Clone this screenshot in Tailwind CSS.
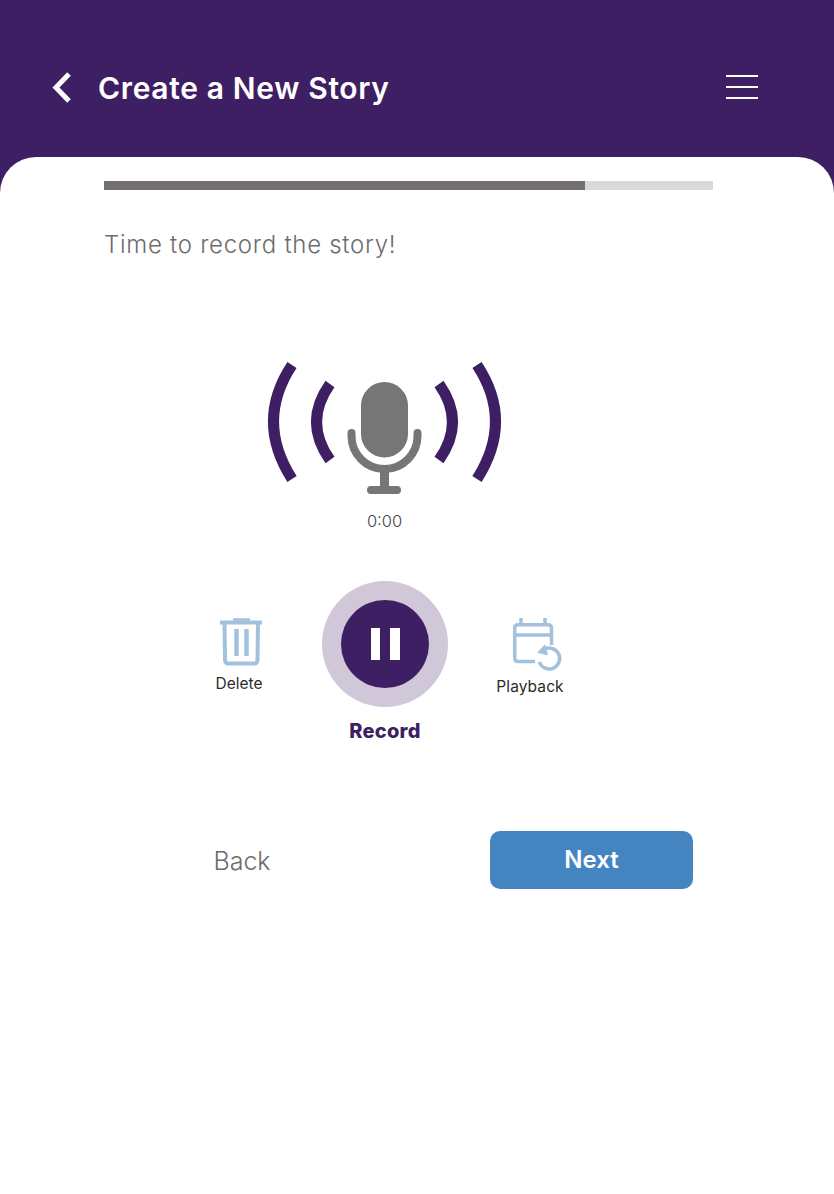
<!DOCTYPE html>
<html lang="en">
<head>
<meta charset="utf-8">
<title>Create a New Story</title>
<script src="https://cdn.jsdelivr.net/npm/@tailwindcss/browser@4"></script>
</head>
<body class="font-['Inter','Liberation_Sans',sans-serif]">
<div class="w-[834px] h-[1194px] overflow-hidden bg-[#3f1f63] flex flex-col">
  <header class="h-[157px] shrink-0 flex items-start pl-[52px] pr-[76px] pt-[71px]">
    <svg class="w-[19px] h-[34px] shrink-0" viewBox="0 0 19 34" fill="none"><path d="M17 3 L4 16.5 L17 30" stroke="#fff" stroke-width="5"/></svg>
    <h1 class="ml-[27px] text-[30px] leading-[34px] font-semibold text-white tracking-[0.65px]">Create a New Story</h1>
    <div class="ml-auto mt-[4px] w-[32px] flex flex-col gap-[9px]">
      <div class="h-[2px] bg-white"></div><div class="h-[2px] bg-white"></div><div class="h-[2px] bg-white"></div>
    </div>
  </header>
  <main class="flex-1 bg-white rounded-t-[36px] pt-[24px]">
    <div class="ml-[104px] w-[609px] h-[9px] bg-[#d9d9d9]"><div class="w-[481px] h-full bg-[#736f6f]"></div></div>
    <p class="ml-[104px] mt-[38px] text-[24px] leading-[34px] font-light text-[#6c6c6c] tracking-[0.72px]">Time to record the story!</p>

    <div class="mt-[93px] flex flex-col items-center w-[769px]">
      <svg class="w-[250px] h-[145px]" viewBox="260 355 250 145" fill="none">
        <g stroke="#3f1f63" stroke-width="11">
          <path d="M292 365 Q255 421 292 479"/>
          <path d="M330 384 Q303 422 330 460"/>
          <path d="M439 384 Q466 422 439 460"/>
          <path d="M477 365 Q514 421 477 479"/>
        </g>
        <rect x="361" y="382" width="47" height="75.500" rx="23.500" fill="#767676"/>
        <path d="M351.500 433 V436 A33 33 0 0 0 417.500 436 V433" stroke="#767676" stroke-width="8" stroke-linecap="round"/>
        <rect x="380" y="469" width="9" height="20" fill="#767676"/>
        <rect x="367" y="486" width="34" height="8" rx="4" fill="#767676"/>
      </svg>
      <span class="mt-[9px] text-[16.5px] leading-[24px] font-light text-[#444]">0:00</span>
    </div>

    <div class="mt-[48px] pl-[204px] flex items-start">
      <div class="w-[70px] mt-[35px] flex flex-col items-center">
        <svg class="w-[46px] h-[52px] ml-[4px]" viewBox="218 616 46 52" fill="none" stroke="#a3c1dd">
          <path d="M220 622.500 H262" stroke-width="4"/>
          <path d="M233 619.500 H250" stroke-width="2.500"/>
          <path d="M224.500 622 L225 660 Q225 663.500 228.500 663.500 H254 Q257.500 663.500 257.500 660 L258 622" stroke-width="4"/>
          <path d="M236.500 629 V656 M246.500 629 V656" stroke-width="4.500"/>
        </svg>
        <span class="mt-[6px] text-[15.5px] leading-[20px] text-[#2b2b2b] font-normal">Delete</span>
      </div>
      <div class="ml-[48px] w-[126px] flex flex-col items-center">
        <div class="w-[126px] h-[126px] rounded-full bg-[#d0c7d9] flex items-center justify-center">
          <div class="w-[88px] h-[88px] rounded-full bg-[#3f1f63] flex items-center justify-center gap-[10px]">
            <div class="w-[9.500px] h-[32px] bg-white"></div><div class="w-[9.500px] h-[32px] bg-white"></div>
          </div>
        </div>
        <span class="mt-[11px] text-[20px] leading-[26px] font-extrabold text-[#3f1f63] tracking-[0.25px]">Record</span>
      </div>
      <div class="ml-[42px] w-[80px] mt-[35px] flex flex-col items-center">
        <svg class="w-[54px] h-[56px] ml-[14px]" viewBox="510 616 54 56" fill="none" stroke="#a3c1dd" stroke-width="3.500">
          <path d="M535 661.500 H518 Q514.700 661.500 514.700 658 V628 Q514.700 624.700 518 624.700 H548 Q551.500 624.700 551.500 628 V645"/>
          <path d="M514.700 635 H551.500"/>
          <path d="M521 618 V624 M545 618 V624"/>
          <path d="M543 650 A10.500 10.500 0 1 1 539.300 662"/>
          <path d="M545.500 645.500 L539.500 652 L547.500 654" fill="#a3c1dd" stroke-width="2.500"/>
        </svg>
        <span class="mt-[5px] text-[15.5px] leading-[20px] text-[#2b2b2b] font-normal tracking-[0.1px]">Playback</span>
      </div>
    </div>

    <div class="mt-[87px] flex items-center">
      <button class="ml-[194px] mt-[2px] w-[96px] text-center text-[25px] leading-[34px] font-light text-[#6c6c6c]">Back</button>
      <button class="ml-[200px] w-[203px] h-[58px] rounded-[10px] bg-[#4484c1] text-white text-[24px] font-semibold">Next</button>
    </div>
  </main>
</div>
</body>
</html>
